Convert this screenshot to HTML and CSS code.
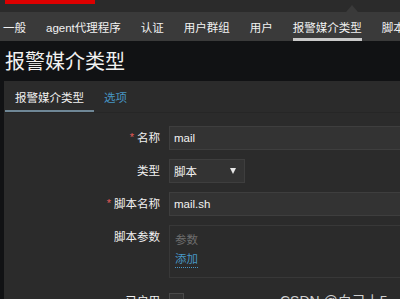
FILE: index.html
```html
<!DOCTYPE html>
<html lang="zh">
<head>
<meta charset="utf-8">
<link rel="stylesheet" href="styles.css">
</head>
<body>
<div class="topbar"><div class="logo"></div></div>
<nav class="nav">
  <span class="nav-notch"></span>
  <a class="nav-item">一般</a>
  <a class="nav-item">agent代理程序</a>
  <a class="nav-item">认证</a>
  <a class="nav-item">用户群组</a>
  <a class="nav-item">用户</a>
  <a class="nav-item active">报警媒介类型</a>
  <a class="nav-item">脚本</a>
</nav>
<h1 class="page-title">报警媒介类型</h1>
<div class="main">
  <div class="panel">
    <div class="tabs">
      <a class="tab active">报警媒介类型</a>
      <a class="tab link">选项</a>
    </div>
    <div class="form">
      <label class="label required">名称</label>
      <div class="field"><div class="input">mail</div></div>

      <label class="label">类型</label>
      <div class="field"><div class="select"><span>脚本</span><span class="caret"></span></div></div>

      <label class="label required">脚本名称</label>
      <div class="field"><div class="input">mail.sh</div></div>

      <label class="label top">脚本参数</label>
      <div class="field"><div class="params"><div class="placeholder">参数</div><div><a class="add">添加</a></div></div></div>

      <label class="label check-label">已启用</label>
      <div class="field check-field"><span class="checkbox"></span></div>
    </div>
  </div>
</div>
<div class="watermark">CSDN @白己上5</div>
</body>
</html>
```

FILE: styles.css
```css
* { box-sizing: border-box; }
html, body {
  margin: 0;
  padding: 0;
}
body {
  width: 400px;
  height: 299px;
  overflow: hidden;
  background: #111214;
  color: #f2f2f2;
  font-family: "Liberation Sans", "Noto Sans CJK SC", sans-serif;
  font-size: 11.5px;
  position: relative;
}
.topbar {
  height: 12px;
  background: #2b2b2b;
  padding-left: 5px;
}
.logo {
  width: 90px;
  height: 4px;
  background: #dd0000;
}
.nav {
  position: relative;
  height: 29px;
  background: #3a3a3a;
  display: flex;
  align-items: stretch;
  gap: 20px;
  padding-left: 3px;
  white-space: nowrap;
}
.nav-notch {
  position: absolute;
  left: 346px;
  top: -7px;
  width: 0;
  height: 0;
  border-left: 6px solid transparent;
  border-right: 6px solid transparent;
  border-bottom: 7px solid #3a3a3a;
}
.nav-item {
  display: flex;
  align-items: center;
  padding-top: 1px;
  color: #f2f2f2;
}
.nav-item.active {
  box-shadow: inset 0 -3px 0 #c9c9c9;
}
.page-title {
  margin: 0;
  height: 40px;
  padding: 1px 0 0 5px;
  line-height: 40px;
  font-size: 20px;
  font-weight: normal;
  color: #f2f2f2;
}
.main {
  display: flex;
  padding-left: 4px;
  height: 218px;
}
.panel {
  flex: 1;
  background: #2b2b2b;
}
.tabs {
  display: flex;
  height: 32px;
  padding-left: 1px;
  border-bottom: 1px solid #262626;
}
.tab {
  display: flex;
  align-items: center;
  padding: 0 10px;
  color: #f2f2f2;
}
.tab.active {
  box-shadow: inset 0 -2px 0 #6f8796;
}
.tab.link {
  color: #4796c4;
}
.form {
  display: grid;
  grid-template-columns: 156px 1fr;
  column-gap: 9px;
  row-gap: 9px;
  padding-top: 13px;
}
.label {
  text-align: right;
  line-height: 24px;
  height: 24px;
  color: #f2f2f2;
}
.label.required::before {
  content: "*";
  color: #e45959;
  margin-right: 3px;
  font-size: 11px;
  position: relative;
  top: -1px;
}
.field {
  min-width: 0;
}
.input {
  height: 24px;
  width: 260px;
  background: #333333;
  border: 1px solid #3e3e3e;
  padding-left: 4px;
  line-height: 22px;
  color: #f2f2f2;
}
.select {
  height: 24px;
  width: 76px;
  background: #333333;
  border: 1px solid #3e3e3e;
  padding: 0 8px 0 4px;
  display: flex;
  align-items: center;
  justify-content: space-between;
}
.caret {
  width: 0;
  height: 0;
  border-left: 3.5px solid transparent;
  border-right: 3.5px solid transparent;
  border-top: 6px solid #e6e6e6;
}
.params {
  width: 260px;
  height: 53px;
  border: 1px solid #383838;
  padding: 6px 0 0 5px;
}
.placeholder {
  color: #6e6e6e;
  line-height: 16px;
}
.add {
  display: inline-block;
  margin-top: 4px;
  color: #4796c4;
  line-height: 15px;
  border-bottom: 1px dotted #4796c4;
}
.check-label {
  margin-top: 7px;
  line-height: 15px;
  height: 15px;
}
.check-field {
  margin-top: 6px;
}
.checkbox {
  display: block;
  width: 15px;
  height: 15px;
  background: #333333;
  border: 1px solid #4a4a4a;
}
.watermark {
  position: absolute;
  left: 280px;
  top: 290px;
  font-size: 14px;
  color: #cfcfcf;
  white-space: nowrap;
}
```
